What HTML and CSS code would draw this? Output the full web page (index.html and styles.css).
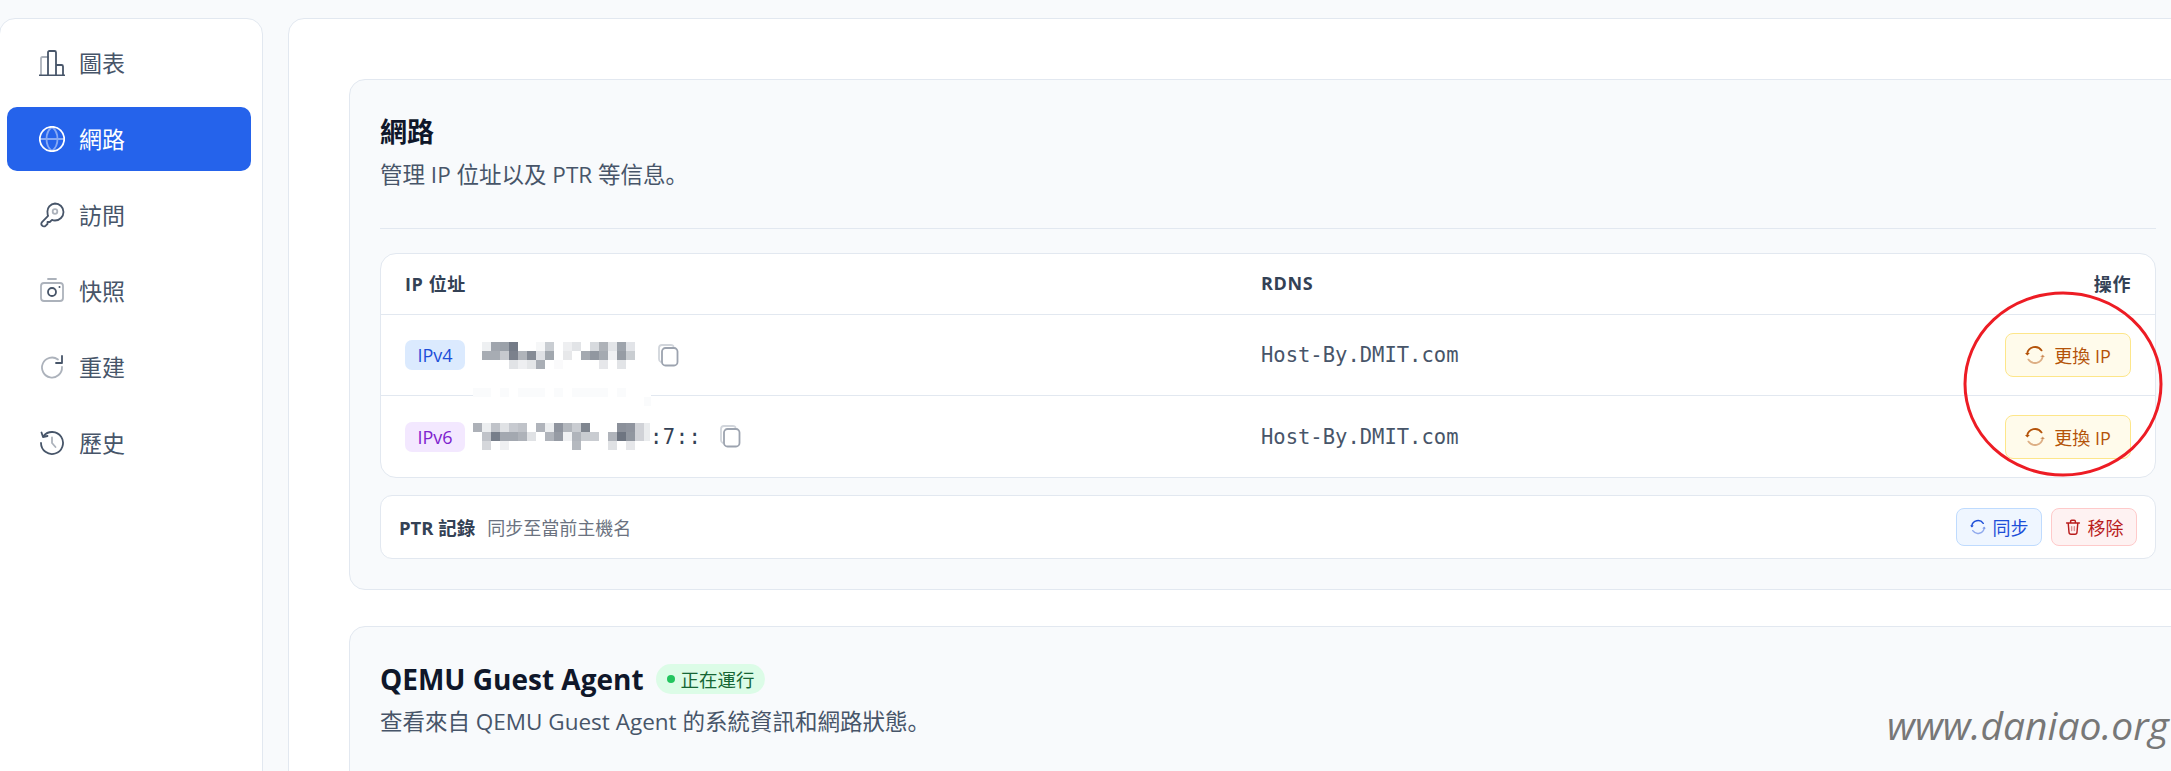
FILE: index.html
```html
<!DOCTYPE html>
<html lang="zh-Hant">
<head>
<meta charset="utf-8">
<title>網路</title>
<link rel="stylesheet" href="styles.css">
</head>
<body>
<svg class="defs" width="0" height="0" aria-hidden="true">
  <symbol id="refresh" viewBox="0 0 20 20">
    <path class="dk" d="M2.2 8.6A8 8 0 0 1 16.6 5.4"/>
    <path class="lt" d="M17.8 11.4A8 8 0 0 1 3.4 14.6"/>
    <path class="fl" d="M0 8l2.4 2.6L4.8 8z"/>
    <path class="fl lf" d="M15.2 12l2.4-2.6L20 12z"/>
  </symbol>
  <symbol id="copy" viewBox="0 0 21 23">
    <path class="cb" d="M15.5 2.2C15 1.300 14 1 13 1H4C2 1 1 2 1 4v11c0 1.500.6 2.500 1.800 3"/>
    <rect class="cf" x="4" y="4" width="15.500" height="17.500" rx="3.500"/>
  </symbol>
</svg>
<div class="page">
  <aside class="sidebar">
    <a class="nav-item">
      <svg class="nav-icon" viewBox="0 0 26 26"><path class="lt" d="M2 25V8.500q0-1.500 1.500-1.500H9"/><path class="dk" d="M9 25V2.500Q9 1 10.500 1h5Q17 1 17 2.500V25M17 15h5.500Q24 15 24 16.500V25M0 25.500h26"/></svg>
      <span>圖表</span>
    </a>
    <a class="nav-item active">
      <svg class="nav-icon" viewBox="0 0 26 26"><circle class="dk" cx="13" cy="13" r="12.200"/><path class="lt" d="M1 13h24M13 1C9 4 7.500 8.500 7.500 13s1.500 9 5.500 12c4-3 5.500-7.500 5.500-12S17 4 13 1z"/></svg>
      <span>網路</span>
    </a>
    <a class="nav-item">
      <svg class="nav-icon" viewBox="0 0 26 26"><path class="dk" d="M16 1.500a8.500 8.500 0 0 1 0 17c-1 0-2-.1-3-.6l-2.200 2.100H8.500v2l-1.800 1.700c-2.500 2-5.700-1-3.700-3.600l6.100-6.300c-.5-1-.6-2-.6-3.300A8 8 0 0 1 16 1.500z"/><circle class="lt" cx="16" cy="9.500" r="2.300"/></svg>
      <span>訪問</span>
    </a>
    <a class="nav-item">
      <svg class="nav-icon" viewBox="0 0 26 26"><path class="lt" d="M9 1h8M5 5h16q3 0 3 3v12q0 3-3 3H5q-3 0-3-3V8q0-3 3-3z"/><circle class="dk" cx="13" cy="14" r="4"/><circle class="fl" cx="20.500" cy="9" r="1"/></svg>
      <span>快照</span>
    </a>
    <a class="nav-item">
      <svg class="nav-icon" viewBox="0 0 26 26"><path class="lt" d="M19 5.500A10 10 0 1 0 23 13"/><path class="dk" d="M23 2v7h-6"/></svg>
      <span>重建</span>
    </a>
    <a class="nav-item">
      <svg class="nav-icon" viewBox="0 0 26 26"><path class="dk" d="M4.500 6A11 11 0 1 1 2 13M2.500 2.500 4 7l4.500-1"/><path class="lt" d="M13 7.500V13l3.500 4"/></svg>
      <span>歷史</span>
    </a>
  </aside>
  <main class="main">
    <section class="panel panel-net">
      <h2 class="panel-title">網路</h2>
      <p class="panel-sub">管理 IP 位址以及 PTR 等信息。</p>
      <hr class="divider">
      <div class="ip-table">
        <div class="ip-row ip-head">
          <span>IP 位址</span><span>RDNS</span><span>操作</span>
        </div>
        <div class="ip-row ip-data">
          <div class="addr addr-v4">
            <span class="badge badge-v4">IPv4</span>
            <svg class="mosaic mosaic-v4" width="153" height="27" viewBox="0 0 17 3" shape-rendering="crispEdges">
              <rect x="0" y="0" width="1" height="1" fill="#eef0f2"/><rect x="1" y="0" width="1" height="1" fill="#a0a5ad"/><rect x="2" y="0" width="1" height="1" fill="#9ba1a9"/><rect x="3" y="0" width="1" height="1" fill="#747b87"/><rect x="6" y="0" width="1" height="1" fill="#f6f7f8"/><rect x="7" y="0" width="1" height="1" fill="#c9cdd2"/><rect x="9" y="0" width="1" height="1" fill="#eeeff1"/><rect x="10" y="0" width="1" height="1" fill="#e2e4e7"/><rect x="12" y="0" width="1" height="1" fill="#d7dade"/><rect x="13" y="0" width="1" height="1" fill="#aeb2b8"/><rect x="14" y="0" width="1" height="1" fill="#e3e5e8"/><rect x="15" y="0" width="1" height="1" fill="#9ea4ac"/><rect x="16" y="0" width="1" height="1" fill="#e2e4e8"/>
              <rect x="0" y="1" width="1" height="1" fill="#a7acb3"/><rect x="1" y="1" width="1" height="1" fill="#a7acb3"/><rect x="2" y="1" width="1" height="1" fill="#c6c9ce"/><rect x="3" y="1" width="1" height="1" fill="#7b818c"/><rect x="4" y="1" width="1" height="1" fill="#b0b4ba"/><rect x="5" y="1" width="1" height="1" fill="#858b95"/><rect x="6" y="1" width="1" height="1" fill="#dfe1e5"/><rect x="7" y="1" width="1" height="1" fill="#a1a7ae"/><rect x="9" y="1" width="1" height="1" fill="#e7e8ea"/><rect x="11" y="1" width="1" height="1" fill="#a4a9b0"/><rect x="12" y="1" width="1" height="1" fill="#9197a0"/><rect x="13" y="1" width="1" height="1" fill="#a5aab1"/><rect x="14" y="1" width="1" height="1" fill="#f0f1f3"/><rect x="15" y="1" width="1" height="1" fill="#969ca4"/><rect x="16" y="1" width="1" height="1" fill="#c9cdd1"/>
              <rect x="3" y="2" width="1" height="1" fill="#e1e3e6"/><rect x="4" y="2" width="1" height="1" fill="#eeeff1"/><rect x="5" y="2" width="1" height="1" fill="#e4e6e8"/><rect x="6" y="2" width="1" height="1" fill="#a9aeb5"/><rect x="8" y="2" width="1" height="1" fill="#fafafb"/><rect x="13" y="2" width="1" height="1" fill="#e6e7ea"/><rect x="15" y="2" width="1" height="1" fill="#e2e4e7"/>
            </svg>
            <svg class="copy-icon copy-v4"><use href="#copy"/></svg>
          </div>
          <span class="mono">Host-By.DMIT.com</span>
          <button class="btn btn-amber"><svg class="btn-icon"><use href="#refresh"/></svg>更換 IP</button>
        </div>
        <div class="ip-row ip-data">
          <svg class="smudge" width="180" height="18" viewBox="0 0 180 18" shape-rendering="crispEdges">
            <rect x="0" y="0" width="178" height="9" fill="#fff"/>
            <rect x="0" y="0" width="18" height="9" fill="#fafbfc"/><rect x="27" y="0" width="9" height="9" fill="#fafbfc"/><rect x="45" y="0" width="27" height="9" fill="#fafbfc"/><rect x="81" y="0" width="9" height="9" fill="#fafbfc"/><rect x="99" y="0" width="36" height="9" fill="#fafbfc"/><rect x="144" y="0" width="9" height="9" fill="#fafbfc"/><rect x="171" y="9" width="7" height="9" fill="#fafbfc"/>
          </svg>
          <div class="addr addr-v6">
            <span class="badge badge-v6">IPv6</span>
            <span class="mono addr-text">
              <svg class="mosaic mosaic-v6" width="177" height="27" viewBox="0 0 19.667 3" shape-rendering="crispEdges">
                <rect x="0" y="0" width="1" height="1" fill="#adb1b8"/><rect x="1" y="0" width="1" height="1" fill="#eceef0"/><rect x="2" y="0" width="1" height="1" fill="#c0c3c9"/><rect x="3" y="0" width="1" height="1" fill="#e0e2e5"/><rect x="4" y="0" width="1" height="1" fill="#c7cad0"/><rect x="5" y="0" width="1" height="1" fill="#c0c3c9"/><rect x="7" y="0" width="1" height="1" fill="#b0b4bb"/><rect x="8" y="0" width="1" height="1" fill="#eceef0"/><rect x="9" y="0" width="1" height="1" fill="#8f949e"/><rect x="10" y="0" width="1" height="1" fill="#b3b7bd"/><rect x="11" y="0" width="1" height="1" fill="#c9ccd1"/><rect x="12" y="0" width="1" height="1" fill="#7f858f"/><rect x="16" y="0" width="1" height="1" fill="#8b909a"/><rect x="17" y="0" width="1" height="1" fill="#8f949e"/><rect x="18" y="0" width="1" height="1" fill="#d0d2d7"/><rect x="19" y="0" width=".667" height="1" fill="#eaecee"/>
                <rect x="1" y="1" width="1" height="1" fill="#c0c3c9"/><rect x="2" y="1" width="1" height="1" fill="#777e8a"/><rect x="3" y="1" width="1" height="1" fill="#a3a8b0"/><rect x="4" y="1" width="1" height="1" fill="#a3a8b0"/><rect x="5" y="1" width="1" height="1" fill="#aeb2b9"/><rect x="6" y="1" width="1" height="1" fill="#e0e2e5"/><rect x="8" y="1" width="1" height="1" fill="#b0b4bb"/><rect x="9" y="1" width="1" height="1" fill="#969ba4"/><rect x="10" y="1" width="1" height="1" fill="#f0f1f3"/><rect x="11" y="1" width="1" height="1" fill="#b0b4bb"/><rect x="12" y="1" width="1" height="1" fill="#c9ccd1"/><rect x="13" y="1" width="1" height="1" fill="#c9ccd1"/><rect x="15" y="1" width="1" height="1" fill="#b0b4bb"/><rect x="16" y="1" width="1" height="1" fill="#6e7581"/><rect x="17" y="1" width="1" height="1" fill="#9197a0"/><rect x="18" y="1" width="1" height="1" fill="#d0d2d7"/><rect x="19" y="1" width=".667" height="1" fill="#eaecee"/>
                <rect x="1" y="2" width="1" height="1" fill="#d5d7db"/><rect x="3" y="2" width="1" height="1" fill="#eff0f2"/><rect x="11" y="2" width="1" height="1" fill="#b5b9bf"/><rect x="15" y="2" width="1" height="1" fill="#dfe1e4"/><rect x="17" y="2" width="1" height="1" fill="#e6e7ea"/>
              </svg>:7::</span>
            <svg class="copy-icon copy-v6"><use href="#copy"/></svg>
          </div>
          <span class="mono">Host-By.DMIT.com</span>
          <button class="btn btn-amber"><svg class="btn-icon"><use href="#refresh"/></svg>更換 IP</button>
        </div>
      </div>
      <div class="ptr">
        <div class="ptr-text"><strong>PTR 記錄</strong><span>同步至當前主機名</span></div>
        <div class="ptr-actions">
          <button class="btn btn-sm btn-blue"><svg class="btn-icon"><use href="#refresh"/></svg>同步</button>
          <button class="btn btn-sm btn-red">
            <svg class="btn-icon" viewBox="0 0 20 20"><path class="dk" d="M2 5h16M7 5V3q0-1.500 1.500-1.500h3Q13 1.500 13 3v2M4 5l1 11.500q.2 2.500 2.500 2.500h5q2.300 0 2.500-2.500L16 5"/><path class="lt" d="M8.300 9.500v5M11.700 9.500v5"/></svg>移除
          </button>
        </div>
      </div>
    </section>
    <section class="panel panel-qemu">
      <div class="title-row">
        <h2 class="panel-title">QEMU Guest Agent</h2>
        <span class="status"><i class="status-dot"></i>正在運行</span>
      </div>
      <p class="panel-sub">查看來自 QEMU Guest Agent 的系統資訊和網路狀態。</p>
    </section>
  </main>
</div>
<svg class="ring" width="202" height="188" viewBox="0 0 202 188"><ellipse cx="101" cy="94" rx="98" ry="91"/></svg>
<div class="watermark">www.daniao.org</div>
</body>
</html>
```

FILE: styles.css
```css
* { box-sizing: border-box; }
html, body { margin: 0; height: 771px; overflow: hidden; }
body {
  background: #f8fafc;
  font-family: "Open Sans", "Noto Sans CJK SC", sans-serif;
  font-feature-settings: "locl" 0;
  color: #475569;
  position: relative;
}
.defs { position: absolute; }
.page { display: flex; gap: 25px; padding-top: 18px; margin-left: -1px; width: 2400px; height: 771px; }

.dk, .lt, .cb, .cf { fill: none; stroke: currentColor; stroke-width: 1.800; stroke-linecap: round; stroke-linejoin: round; }
.lt { opacity: .45; }
.fl { fill: currentColor; }
.lf { opacity: .45; }

.sidebar {
  flex: none; width: 264px; height: 800px;
  background: #fff; border: 1px solid #e2e8f0; border-radius: 16px;
  padding: 12px 11px 0 7px;
  display: flex; flex-direction: column; gap: 12px;
}
.nav-item { display: flex; align-items: center; gap: 14px; height: 64px; padding-left: 32px; border-radius: 10px; font-size: 23px; color: #475569; }
.nav-item span { padding-bottom: 3px; }
.nav-item.active { background: #2563eb; color: #fff; }
.nav-icon { width: 26px; height: 26px; flex: none; }

.main {
  flex: none; width: 2000px; height: 800px;
  background: #fff; border: 1px solid #e2e8f0; border-radius: 16px;
  padding: 60px 0 0 60px;
  display: flex; flex-direction: column; gap: 36px; align-items: flex-start;
}
.panel { width: 1838px; background: #f8fafc; border: 1px solid #e2e8f0; border-radius: 16px; padding: 34px 30px 30px; }
.panel-net { height: 511px; }
.panel-qemu { height: 300px; }
.panel-title { margin: 0; font-size: 27px; line-height: 36px; font-weight: 700; color: #0f172a; }
.panel-qemu .panel-title { font-size: 28px; }
.panel-sub { margin: 9px 0 0; font-size: 22.500px; line-height: 32px; color: #475569; }
.divider { border: 0; border-top: 1px solid #e2e8f0; margin: 37px 0 24px; }

.ip-table { width: 1776px; background: #fff; border: 1px solid #e2e8f0; border-radius: 16px; }
.ip-row { position: relative; display: grid; grid-template-columns: 856px 1fr auto; align-items: center; padding: 0 24px 0 24px; }
.ip-head { height: 60px; padding-bottom: 2px; font-size: 18px; font-weight: 700; color: #334155; letter-spacing: .6px; }
.ip-data { height: 81px; border-top: 1px solid #e2e8f0; }
.ip-data + .ip-data { height: 82px; }
.addr { display: flex; align-items: center; }
.badge { width: 60px; height: 30px; border-radius: 7px; font-size: 18px; line-height: 30px; text-align: center; }
.badge-v4 { background: #dbeafe; color: #1d4ed8; }
.badge-v6 { background: #f3e8ff; color: #7e22ce; }
.mosaic { display: block; flex: none; }
.mosaic-v4 { margin-left: 17px; }
.mosaic-v6 { display: inline-block; vertical-align: middle; }
.addr-v6 .addr-text { margin-left: 8px; display: flex; align-items: center; letter-spacing: .5px; color: #334155; }
.mono { font-family: "DejaVu Sans Mono", monospace; font-size: 20.500px; color: #475569; }
.copy-icon { width: 21px; height: 23px; color: #9ca3af; flex: none; }
.copy-v4 { margin-left: 23px; }
.copy-v6 { margin-left: 19px; }
.cb { stroke: #d1d5db; }
.cf { stroke: #9ca3af; }
.smudge { position: absolute; left: 92px; top: -8px; }

.btn {
  display: inline-flex; align-items: center; justify-content: center; gap: 9px;
  height: 44px; width: 126px; padding: 0; border: 1px solid; border-radius: 8px;
  font: 18px "Open Sans", "Noto Sans CJK SC", sans-serif;
  font-feature-settings: "locl" 0;
}
.btn-icon { width: 20px; height: 20px; }
.btn-amber { background: #fffbeb; border-color: #fde68a; color: #b45309; }
.btn-sm { width: 86px; height: 38px; gap: 7px; }
.btn-sm .btn-icon { width: 16px; height: 16px; }
.btn-blue { background: #eff6ff; border-color: #bfdbfe; color: #1d4ed8; }
.btn-red { background: #fef2f2; border-color: #fecaca; color: #b91c1c; }

.ptr {
  width: 1776px; height: 64px; margin-top: 17px;
  display: flex; align-items: center; justify-content: space-between;
  padding: 0 18px 0 18px;
  background: #fff; border: 1px solid #e2e8f0; border-radius: 12px;
}
.ptr-text { display: flex; align-items: center; gap: 12px; font-size: 18px; color: #6b7280; }
.ptr-text strong { color: #334155; font-weight: 700; font-size: 18.500px; }
.ptr-actions { display: flex; gap: 9px; }

.title-row { display: flex; align-items: center; gap: 12px; }
.status { display: inline-flex; align-items: center; gap: 6px; height: 30px; padding: 0 10px 0 11px; border-radius: 15px; background: #dcfce7; color: #166534; font-size: 18.500px; }
.status-dot { width: 8px; height: 8px; border-radius: 50%; background: #22c55e; }

.ring { position: absolute; left: 1962px; top: 290px; }
.ring ellipse { fill: none; stroke: #ed1c24; stroke-width: 3px; }
.watermark {
  position: absolute; left: 1887px; top: 697px; white-space: nowrap;
  font: italic 500 39px/56px "Open Sans", sans-serif; letter-spacing: 0; color: #777;
}
```
